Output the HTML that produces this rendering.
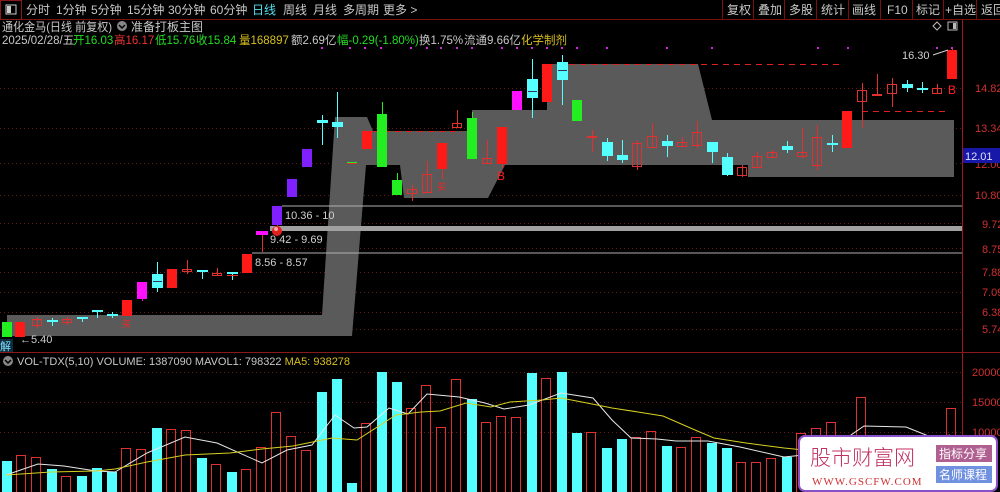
<!DOCTYPE html>
<html><head><meta charset="utf-8"><style>
html,body{margin:0;padding:0;background:#000;width:1000px;height:492px;overflow:hidden}
svg{display:block;font-family:"Liberation Sans","Noto Sans CJK SC",sans-serif}
</style></head><body>
<svg width="1000" height="492" viewBox="0 0 1000 492" xmlns="http://www.w3.org/2000/svg">
<rect width="1000" height="492" fill="#000"/>
<!-- top bar -->
<line x1="0" y1="19.5" x2="1000" y2="19.5" stroke="#7a1010"/>
<rect x="0.5" y="0.5" width="21" height="19" fill="none" stroke="#8a1a1a"/>
<rect x="6" y="5" width="10" height="9" fill="none" stroke="#ccc"/><rect x="7" y="6" width="4" height="7" fill="#ccc"/>
<g font-size="12" fill="#c8c8c8">
<text x="26" y="14">分时</text><text x="56" y="14">1分钟</text><text x="91" y="14">5分钟</text><text x="127" y="14">15分钟</text><text x="168" y="14">30分钟</text><text x="210" y="14">60分钟</text>
<text x="252" y="14" fill="#55e0f0">日线</text><text x="283" y="14">周线</text><text x="313" y="14">月线</text><text x="343" y="14">多周期</text><text x="383" y="14">更多 &gt;</text>
<text x="727" y="14">复权</text><text x="758" y="14">叠加</text><text x="789" y="14">多股</text><text x="821" y="14">统计</text><text x="852" y="14">画线</text><text x="887" y="14">F10</text><text x="916" y="14">标记</text><text x="945" y="14">+自选</text><text x="981" y="14">返回</text>
</g>
<g stroke="#7a1010"><line x1="722.5" y1="0" x2="722.5" y2="19"/><line x1="753.5" y1="0" x2="753.5" y2="19"/><line x1="784.5" y1="0" x2="784.5" y2="19"/><line x1="816.5" y1="0" x2="816.5" y2="19"/><line x1="848.5" y1="0" x2="848.5" y2="19"/><line x1="880.5" y1="0" x2="880.5" y2="19"/><line x1="912.5" y1="0" x2="912.5" y2="19"/><line x1="943.5" y1="0" x2="943.5" y2="19"/><line x1="976.5" y1="0" x2="976.5" y2="19"/></g>
<!-- title lines -->
<text x="2" y="31" font-size="12" fill="#c8c8c8" textLength="110" lengthAdjust="spacingAndGlyphs">通化金马(日线 前复权)</text>
<circle cx="122" cy="26" r="5" fill="#888"/><path d="M119 25 L122 28 L125 25" stroke="#000" stroke-width="1.5" fill="none"/>
<text x="131" y="31" font-size="12" fill="#c8c8c8">准备打板主图</text>
<g font-size="11.5">
<text x="2" y="44" fill="#c8c8c8">2025/02/28/五</text>
<text x="73" y="44" fill="#22dd22">开16.03</text>
<text x="114" y="44" fill="#ee3333">高16.17</text>
<text x="155" y="44" fill="#22dd22">低15.76</text>
<text x="196" y="44" fill="#22dd22">收15.84</text>
<text x="239" y="44" fill="#d8c020">量168897</text>
<text x="291" y="44" fill="#c8c8c8">额2.69亿</text>
<text x="337" y="44" fill="#22dd22">幅-0.29(-1.80%)</text>
<text x="419" y="44" fill="#c8c8c8">换1.75%</text>
<text x="464" y="44" fill="#c8c8c8">流通9.66亿</text>
<text x="521" y="44" fill="#d8c020">化学制剂</text>
</g>
<path d="M937 22 L941 26 L937 30 L933 26 Z" fill="none" stroke="#bbb"/>
<rect x="948" y="22" width="9" height="8" fill="none" stroke="#bbb"/><rect x="953" y="23" width="3" height="6" fill="#bbb"/>
<!-- grid -->
<g stroke="#6a1818" stroke-dasharray="1,3">
<line x1="0" y1="88.5" x2="962" y2="88.5"/><line x1="0" y1="128.5" x2="962" y2="128.5"/><line x1="0" y1="163.5" x2="962" y2="163.5"/><line x1="0" y1="195.5" x2="962" y2="195.5"/><line x1="0" y1="223.5" x2="962" y2="223.5"/><line x1="0" y1="248.5" x2="962" y2="248.5"/><line x1="0" y1="272.5" x2="962" y2="272.5"/><line x1="0" y1="292.5" x2="962" y2="292.5"/><line x1="0" y1="312.5" x2="962" y2="312.5"/><line x1="0" y1="329.5" x2="962" y2="329.5"/>
<line x1="0" y1="372.5" x2="962" y2="372.5"/><line x1="0" y1="402.5" x2="962" y2="402.5"/><line x1="0" y1="432.5" x2="962" y2="432.5"/>
</g>
<!-- gray band -->
<polygon fill="#5a5a5a" points="7,315 322,315 335,117 367,117 373,131 472,131 472,110 547,110 547,64 698,64 712,120 954,120 954,177 748,177 748,165 505,165 488,198 404,198 400,165 366,165 352,336 7,336"/>
<!-- horizontal levels -->
<line x1="282" y1="206" x2="962" y2="206" stroke="#b0b0b0"/>
<rect x="270" y="226" width="692" height="5" fill="#a0a0a0"/>
<line x1="252" y1="253" x2="962" y2="253" stroke="#b0b0b0"/>
<g font-size="11" fill="#d0d0d0"><text x="285" y="219">10.36 - 10</text><text x="270" y="243">9.42 - 9.69</text><text x="255" y="266">8.56 - 8.57</text></g>
<!-- dashed red -->
<g stroke="#e02020" stroke-dasharray="6,5"><line x1="547" y1="64.5" x2="840" y2="64.5"/><line x1="862" y1="111.5" x2="945" y2="111.5"/><line x1="373" y1="131.5" x2="462" y2="131.5"/></g>
<!-- magenta dots -->
<g fill="#e020e0">
<rect x="321" y="47" width="2" height="2"/><rect x="349" y="47" width="2" height="2"/><rect x="364" y="47" width="2" height="2"/><rect x="380" y="47" width="2" height="2"/><rect x="410" y="47" width="2" height="2"/><rect x="426" y="47" width="2" height="2"/><rect x="440" y="47" width="2" height="2"/><rect x="456" y="47" width="2" height="2"/><rect x="471" y="47" width="2" height="2"/><rect x="501" y="47" width="2" height="2"/><rect x="516" y="47" width="2" height="2"/><rect x="531" y="47" width="2" height="2"/><rect x="546" y="47" width="2" height="2"/><rect x="561" y="47" width="2" height="2"/><rect x="576" y="47" width="2" height="2"/><rect x="606" y="47" width="2" height="2"/><rect x="666" y="47" width="2" height="2"/><rect x="711" y="47" width="2" height="2"/><rect x="817" y="47" width="2" height="2"/><rect x="847" y="47" width="2" height="2"/><rect x="936" y="47" width="2" height="2"/><rect x="951" y="47" width="2" height="2"/>
</g>
<!-- candles -->
<g stroke-width="1">
<g stroke="#e03030">
<line x1="37.5" y1="317" x2="37.5" y2="328"/><line x1="67.5" y1="317" x2="67.5" y2="325"/><line x1="187.5" y1="260" x2="187.5" y2="274"/><line x1="217.5" y1="268" x2="217.5" y2="276"/><line x1="262.5" y1="234" x2="262.5" y2="252"/><line x1="412.5" y1="185" x2="412.5" y2="201"/><line x1="427.5" y1="161" x2="427.5" y2="193"/><line x1="457.5" y1="110" x2="457.5" y2="128"/><line x1="487.5" y1="140" x2="487.5" y2="164"/><line x1="592.5" y1="130" x2="592.5" y2="152"/><line x1="637.5" y1="140" x2="637.5" y2="170"/><line x1="652.5" y1="123" x2="652.5" y2="147"/><line x1="682.5" y1="137" x2="682.5" y2="146"/><line x1="697.5" y1="121" x2="697.5" y2="148"/><line x1="742.5" y1="165" x2="742.5" y2="177"/><line x1="757.5" y1="152" x2="757.5" y2="167"/><line x1="772.5" y1="150" x2="772.5" y2="158"/><line x1="802.5" y1="128" x2="802.5" y2="158"/><line x1="817.5" y1="125" x2="817.5" y2="170"/><line x1="862.5" y1="83" x2="862.5" y2="128"/><line x1="877.5" y1="74" x2="877.5" y2="96"/><line x1="892.5" y1="78" x2="892.5" y2="107"/><line x1="937.5" y1="84" x2="937.5" y2="93"/><line x1="952.5" y1="48" x2="952.5" y2="79"/><line x1="277.5" y1="225" x2="277.5" y2="231"/><line x1="442.5" y1="169" x2="442.5" y2="179"/><line x1="502.5" y1="164" x2="502.5" y2="168"/>
</g>
<g stroke="#55ffff">
<line x1="52.5" y1="318" x2="52.5" y2="326"/><line x1="82.5" y1="317" x2="82.5" y2="322"/><line x1="97.5" y1="310" x2="97.5" y2="318"/><line x1="112.5" y1="312" x2="112.5" y2="318"/><line x1="157.5" y1="262" x2="157.5" y2="292"/><line x1="202.5" y1="270" x2="202.5" y2="279"/><line x1="232.5" y1="272" x2="232.5" y2="280"/><line x1="322.5" y1="115" x2="322.5" y2="145"/><line x1="337.5" y1="92" x2="337.5" y2="138"/><line x1="532.5" y1="59" x2="532.5" y2="118"/><line x1="562.5" y1="55" x2="562.5" y2="105"/><line x1="607.5" y1="138" x2="607.5" y2="161"/><line x1="622.5" y1="140" x2="622.5" y2="163"/><line x1="667.5" y1="135" x2="667.5" y2="157"/><line x1="712.5" y1="142" x2="712.5" y2="163"/><line x1="727.5" y1="153" x2="727.5" y2="176"/><line x1="787.5" y1="141" x2="787.5" y2="153"/><line x1="832.5" y1="135" x2="832.5" y2="152"/><line x1="907.5" y1="80" x2="907.5" y2="92"/><line x1="922.5" y1="82" x2="922.5" y2="93"/>
</g>
<g stroke="#22ee22"><line x1="382.5" y1="102" x2="382.5" y2="114"/><line x1="397.5" y1="173" x2="397.5" y2="180"/><line x1="472.5" y1="112" x2="472.5" y2="118"/></g>
<g stroke="#e020e0"><line x1="142.5" y1="299" x2="142.5" y2="301"/></g>
<g fill="#22ee22"><rect x="2" y="322" width="10" height="15"/><rect x="377" y="114" width="10" height="53"/><rect x="392" y="180" width="10" height="15"/><rect x="467" y="118" width="10" height="41"/><rect x="572" y="100" width="10" height="21"/><rect x="347" y="162" width="10" height="2"/></g>
<g fill="#ff1a1a"><rect x="15" y="322" width="10" height="15"/><rect x="122" y="300" width="10" height="16"/><rect x="167" y="269" width="10" height="19"/><rect x="242" y="254" width="10" height="19"/><rect x="362" y="131" width="10" height="18"/><rect x="437" y="143" width="10" height="26"/><rect x="497" y="127" width="10" height="37"/><rect x="542" y="64" width="10" height="38"/><rect x="842" y="111" width="10" height="37"/><rect x="947" y="50" width="10" height="29"/></g>
<g fill="#ff10ff"><rect x="137" y="282" width="10" height="17"/><rect x="256" y="231" width="12" height="4"/><rect x="512" y="91" width="10" height="19"/></g>
<g fill="#8020ff"><rect x="272" y="206" width="10" height="19"/><rect x="287" y="179" width="10" height="18"/><rect x="302" y="149" width="10" height="18"/></g>
<g fill="#55ffff"><rect x="47" y="320" width="11" height="2"/><rect x="77" y="317" width="11" height="2"/><rect x="92" y="310" width="11" height="2"/><rect x="107" y="314" width="11" height="2"/><rect x="152" y="274" width="11" height="14"/><rect x="197" y="270" width="11" height="2"/><rect x="227" y="272" width="11" height="2"/><rect x="317" y="120" width="11" height="3"/><rect x="332" y="122" width="11" height="5"/><rect x="527" y="79" width="11" height="19"/><rect x="557" y="62" width="11" height="18"/><rect x="602" y="142" width="11" height="14"/><rect x="617" y="155" width="11" height="5"/><rect x="662" y="141" width="11" height="5"/><rect x="707" y="142" width="11" height="10"/><rect x="722" y="157" width="11" height="18"/><rect x="782" y="146" width="11" height="4"/><rect x="827" y="143" width="11" height="2"/><rect x="902" y="84" width="11" height="4"/><rect x="917" y="88" width="11" height="2"/></g>
<g stroke="#335" stroke-width="1"><line x1="153" y1="281.5" x2="162" y2="281.5"/><line x1="528" y1="91.5" x2="537" y2="91.5"/><line x1="558" y1="70.5" x2="567" y2="70.5"/></g>
<g fill="none" stroke="#e03030">
<rect x="32.5" y="319.5" width="9" height="6"/><rect x="62.5" y="319.5" width="9" height="3"/><rect x="182.5" y="269.5" width="9" height="2"/><rect x="212.5" y="273.5" width="9" height="2"/><rect x="407.5" y="189.5" width="9" height="4"/><rect x="422.5" y="174.5" width="9" height="18"/><rect x="452.5" y="123.5" width="9" height="4"/><rect x="482.5" y="158.5" width="9" height="5"/><rect x="587.5" y="136.5" width="9" height="1"/><rect x="632.5" y="143.5" width="9" height="23"/><rect x="647.5" y="136.5" width="9" height="11"/><rect x="677.5" y="142.5" width="9" height="4"/><rect x="692.5" y="132.5" width="9" height="13"/><rect x="737.5" y="167.5" width="9" height="8"/><rect x="752.5" y="156.5" width="9" height="11"/><rect x="767.5" y="152.5" width="9" height="5"/><rect x="797.5" y="152.5" width="9" height="4"/><rect x="812.5" y="137.5" width="9" height="28"/><rect x="857.5" y="90.5" width="9" height="11"/><rect x="872.5" y="94.5" width="9" height="1"/><rect x="887.5" y="84.5" width="9" height="9"/><rect x="932.5" y="88.5" width="9" height="5"/>
</g>
<g stroke="#e03030"><line x1="227" y1="275.5" x2="238" y2="275.5"/><line x1="347" y1="163.5" x2="357" y2="163.5"/></g>
</g>
<!-- signals -->
<g font-size="12" fill="#ff2020"><text x="497" y="180">B</text><text x="948" y="94">B</text><text x="122" y="327" font-size="9">买</text><text x="437" y="190" font-size="9">买</text></g>
<text x="902" y="59" font-size="11" fill="#d0d0d0">16.30</text><line x1="933" y1="55" x2="948" y2="50" stroke="#d0d0d0"/>
<circle cx="277" cy="231" r="5" fill="#e02020"/><circle cx="276" cy="229" r="2" fill="#ffaaaa"/>
<text x="20" y="343" font-size="11" fill="#d0d0d0">←5.40</text>
<rect x="0" y="339" width="13" height="13" fill="#0d2b3b"/><text x="0" y="350" font-size="11" fill="#80e0ff">解</text>
<!-- right axis -->
<line x1="962.5" y1="20" x2="962.5" y2="492" stroke="#a01818"/>
<g font-size="11" fill="#d03030">
<text x="975" y="92">14.82</text><text x="975" y="132">13.34</text><text x="975" y="168">12.00</text><text x="975" y="199">10.80</text><text x="982" y="228">9.72</text><text x="982" y="253">8.75</text><text x="982" y="276">7.88</text><text x="982" y="296">7.09</text><text x="982" y="316">6.38</text><text x="982" y="333">5.74</text>
<text x="972" y="376">20000</text><text x="972" y="406">15000</text><text x="972" y="436">10000</text>
</g>
<rect x="963" y="148" width="37" height="15" fill="#1818a8"/><text x="965" y="160" font-size="11" fill="#e0e0ff">12.01</text>
<!-- volume separator -->
<line x1="0" y1="352.5" x2="1000" y2="352.5" stroke="#8a1a1a"/>
<circle cx="8" cy="361" r="5" fill="#888"/><path d="M5 360 L8 363 L11 360" stroke="#000" stroke-width="1.5" fill="none"/>
<text x="17" y="365" font-size="11" fill="#c8c8c8">VOL-TDX(5,10) VOLUME: 1387090 MAVOL1: 798322 <tspan fill="#d8c020">MA5: 938278</tspan></text>
<!-- volume bars -->
<g fill="#55ffff">
<rect x="2" y="461" width="10" height="31"/><rect x="47" y="469" width="10" height="23"/><rect x="77" y="476" width="10" height="16"/><rect x="92" y="468" width="10" height="24"/><rect x="107" y="472" width="10" height="20"/><rect x="152" y="428" width="10" height="64"/><rect x="197" y="458" width="10" height="34"/><rect x="227" y="472" width="10" height="20"/><rect x="317" y="392" width="10" height="100"/><rect x="332" y="379" width="10" height="113"/><rect x="347" y="483" width="10" height="9"/><rect x="377" y="372" width="10" height="120"/><rect x="392" y="382" width="10" height="110"/><rect x="467" y="399" width="10" height="93"/><rect x="527" y="373" width="10" height="119"/><rect x="557" y="372" width="10" height="120"/><rect x="572" y="433" width="10" height="59"/><rect x="602" y="448" width="10" height="44"/><rect x="617" y="439" width="10" height="53"/><rect x="662" y="446" width="10" height="46"/><rect x="707" y="443" width="10" height="49"/><rect x="722" y="448" width="10" height="44"/><rect x="782" y="457" width="10" height="35"/>
</g>
<g fill="none" stroke="#e03030">
<rect x="16.5" y="455.5" width="9" height="37"/><rect x="31.5" y="457.5" width="9" height="35"/><rect x="61.5" y="476.5" width="9" height="16"/><rect x="121.5" y="448.5" width="9" height="44"/><rect x="136.5" y="449.5" width="9" height="43"/><rect x="166.5" y="429.5" width="9" height="63"/><rect x="181.5" y="430.5" width="9" height="62"/><rect x="211.5" y="464.5" width="9" height="28"/><rect x="241.5" y="469.5" width="9" height="23"/><rect x="256.5" y="447.5" width="9" height="45"/><rect x="271.5" y="412.5" width="9" height="80"/><rect x="286.5" y="436.5" width="9" height="56"/><rect x="301.5" y="450.5" width="9" height="42"/><rect x="361.5" y="423.5" width="9" height="69"/><rect x="406.5" y="408.5" width="9" height="84"/><rect x="421.5" y="385.5" width="9" height="107"/><rect x="436.5" y="427.5" width="9" height="65"/><rect x="451.5" y="379.5" width="9" height="113"/><rect x="481.5" y="422.5" width="9" height="70"/><rect x="496.5" y="416.5" width="9" height="76"/><rect x="511.5" y="417.5" width="9" height="75"/><rect x="541.5" y="378.5" width="9" height="114"/><rect x="586.5" y="432.5" width="9" height="60"/><rect x="631.5" y="437.5" width="9" height="55"/><rect x="646.5" y="431.5" width="9" height="61"/><rect x="676.5" y="447.5" width="9" height="45"/><rect x="691.5" y="437.5" width="9" height="55"/><rect x="736.5" y="462.5" width="9" height="30"/><rect x="751.5" y="462.5" width="9" height="30"/><rect x="766.5" y="458.5" width="9" height="34"/><rect x="796.5" y="433.5" width="9" height="59"/><rect x="811.5" y="428.5" width="9" height="64"/><rect x="826.5" y="422.5" width="9" height="70"/><rect x="856.5" y="397.5" width="9" height="95"/><rect x="946.5" y="408.5" width="9" height="84"/>
</g>
<!-- MA lines -->
<polyline fill="none" stroke="#e8e8e8" stroke-width="1" points="6,475 38,464 64,466 96,471 115,472 147,453 185,437 217,443 262,463 287,450 312,445 335,415 354,428 367,427 389,408 408,414 427,394 459,397 485,403 504,409 529,405 561,393 593,398 612,420 631,438 657,439 676,441 708,441 740,447 784,457 804,455 848,437 864,426 906,427 931,437"/>
<polyline fill="none" stroke="#d8d020" stroke-width="1" points="6,475 51,472 96,471 115,469 147,462 185,455 230,453 262,449 293,446 332,438 357,440 396,415 421,412 440,411 466,403 491,407 510,402 542,400 561,398 587,403 612,408 638,412 663,416 695,430 714,438 746,443 784,448 804,450 900,444 950,435"/>
<!-- watermark -->
<rect x="799" y="436" width="198" height="55" rx="6" fill="#fff" stroke="#8a50c8" stroke-width="2"/>
<text x="810" y="465" font-size="21" fill="#c03060" font-family="'Noto Sans CJK SC',sans-serif" font-weight="300">股市财富网</text>
<text x="812" y="485" font-size="11" fill="#d03030" font-family="'Liberation Serif',serif" letter-spacing="1">WWW.GSCFW.COM</text>
<rect x="936" y="445" width="56" height="17" fill="#b06090"/><text x="939" y="458" font-size="12" fill="#fff">指标分享</text>
<rect x="936" y="466" width="56" height="17" fill="#7090e0"/><text x="939" y="479" font-size="12" fill="#fff">名师课程</text>
</svg>
</body></html>
